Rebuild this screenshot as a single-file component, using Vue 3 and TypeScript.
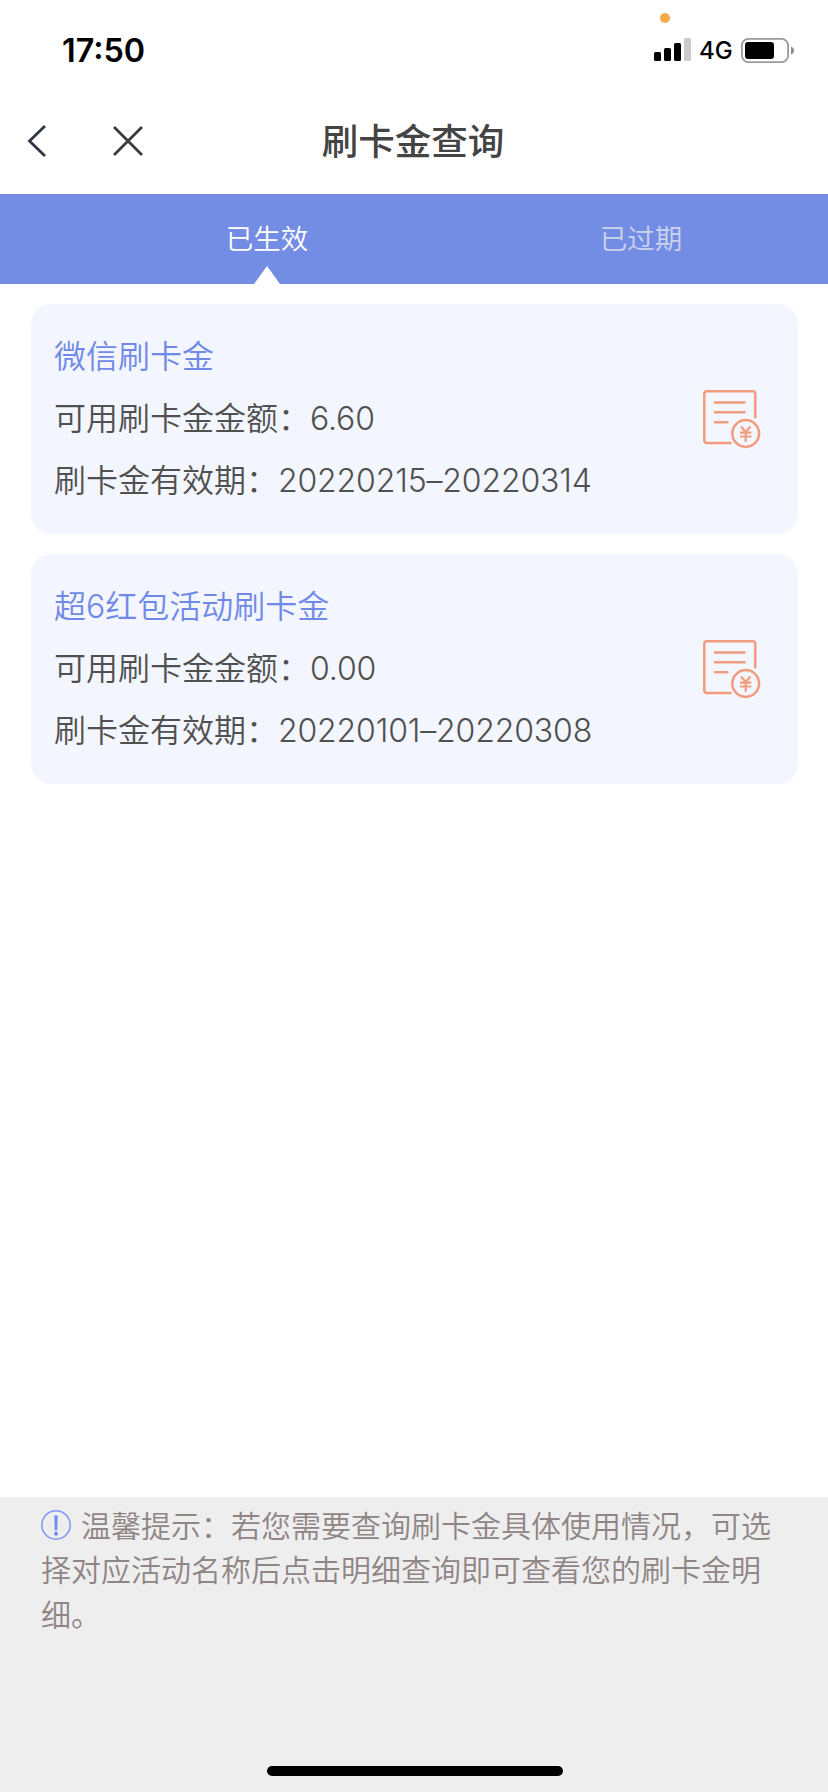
<script setup lang="ts">
import { ref } from 'vue'

interface Fund {
  name: string
  amount: string
  validity: string
}

const tabs: string[] = ['已生效', '已过期']
const activeTab = ref(0)

const funds: Fund[] = [
  { name: '微信刷卡金', amount: '6.60', validity: '20220215–20220314' },
  { name: '超6红包活动刷卡金', amount: '0.00', validity: '20220101–20220308' },
]
</script>

<template>
  <div class="screen">
    <header class="status">
      <span class="time">17:50</span>
      <i class="privacy-dot"></i>
      <div class="indicators">
        <svg class="signal" width="38" height="24" viewBox="0 0 38 24">
          <rect x="0" y="14" width="7" height="9" rx="1.5" />
          <rect x="10" y="10" width="7" height="13" rx="1.5" />
          <rect x="20" y="5" width="7" height="18" rx="1.5" />
          <rect x="30" y="0" width="7" height="23" rx="1.5" fill="#cbcbcb" />
        </svg>
        <span class="network">4G</span>
        <svg class="battery" width="53" height="25" viewBox="0 0 53 25">
          <rect x="0.9" y="0.9" width="46.2" height="23.2" rx="6.5" fill="none" stroke="#9b9b9b" stroke-width="1.8" />
          <rect x="4" y="4" width="29" height="17" rx="3" />
          <path d="M50 8.5 C54 10 54 15 50 16.5Z" fill="#8c8c8c" />
        </svg>
      </div>
    </header>

    <nav class="navbar">
      <svg class="back" width="20" height="34" viewBox="0 0 20 34">
        <path d="M18 2 L2.5 17 L18 32" fill="none" stroke="#2f3742" stroke-width="2.8" />
      </svg>
      <svg class="close" width="32" height="32" viewBox="0 0 32 32">
        <path d="M2 2 L30 30 M30 2 L2 30" fill="none" stroke="#3c3c3c" stroke-width="2.8" />
      </svg>
      <h1 class="title">刷卡金查询</h1>
    </nav>

    <div class="tabs">
      <button
        v-for="(tab, i) in tabs"
        :key="tab"
        class="tab"
        :class="{ active: i === activeTab }"
        @click="activeTab = i"
      >{{ tab }}</button>
    </div>

    <main class="list">
      <section v-for="fund in funds" :key="fund.name" class="card">
        <div class="info">
          <p class="name">{{ fund.name }}</p>
          <p>可用刷卡金金额：<span class="num">{{ fund.amount }}</span></p>
          <p>刷卡金有效期：<span class="num">{{ fund.validity }}</span></p>
        </div>
        <svg class="bill" width="58" height="59" viewBox="0 0 58 59" fill="none" stroke="#f19c7e" stroke-width="2.5">
          <path d="M52.3 28.5 V4 Q52.3 1.3 49.6 1.3 H4 Q1.3 1.3 1.3 4 V50.3 Q1.3 53 4 53 H28.5" />
          <path d="M12 12.4 H41.5 M12 22.3 H41.5 M12 32.2 H24.5" stroke-linecap="round" />
          <circle cx="42.7" cy="43.5" r="13.4" />
          <path d="M38 36.5 L42.7 42 L47.4 36.5 M42.7 42 V51.8 M37 42.6 H48.4 M37 46.5 H48.4" stroke-width="2.2" />
        </svg>
      </section>
    </main>

    <footer class="notice">
      <p class="tip">
        <svg class="alert" width="30" height="30" viewBox="0 0 30 30">
          <circle cx="15" cy="15" r="14.2" fill="none" stroke="#7b96f5" stroke-width="1.5" />
          <path d="M13.3 5.5 H16.7 L16.2 20.5 H13.8Z" fill="#6f8cf2" />
          <circle cx="15" cy="23.8" r="2" fill="#6f8cf2" />
        </svg>温馨提示：若您需要查询刷卡金具体使用情况，可选择对应活动名称后点击明细查询即可查看您的刷卡金明细。
      </p>
      <div class="home-bar"></div>
    </footer>
  </div>
</template>

<style>
body {
  margin: 0;
  background: #fff;
}
</style>

<style scoped>
.screen {
  width: 828px;
  height: 1792px;
  display: flex;
  flex-direction: column;
  background: #fff;
  overflow: hidden;
  font-family: "Noto Sans CJK SC", sans-serif;
  font-weight: 350;
}

.status {
  position: relative;
  height: 98px;
  box-sizing: border-box;
  padding: 2px 34px 0 62px;
  display: flex;
  align-items: center;
  justify-content: space-between;
  font-family: Inter, sans-serif;
  color: #000;
}

.time {
  font-size: 32.3px;
  font-weight: 600;
  line-height: 40px;
  padding-top: 2px;
}

.privacy-dot {
  position: absolute;
  left: 660px;
  top: 13px;
  width: 10px;
  height: 10px;
  border-radius: 50%;
  background: #f3aa48;
}

.indicators {
  display: flex;
  align-items: center;
}

.network {
  width: 34px;
  margin: 2px 8px 0 7px;
  font-size: 24px;
  line-height: 30px;
  font-weight: 450;
}

.battery {
  margin-top: 1px;
}

.navbar {
  position: relative;
  height: 96px;
  box-sizing: border-box;
  padding: 0 0 10px 27px;
  display: flex;
  align-items: center;
}

.close {
  margin-left: 65px;
}

.title {
  position: absolute;
  inset: 0 2px 10px 0;
  margin: 0;
  text-align: center;
  font-size: 36.5px;
  line-height: 84px;
  font-weight: 500;
  color: #444;
}

.tabs {
  height: 90px;
  box-sizing: border-box;
  padding-left: 80px;
  display: flex;
  background: #738de5;
}

.tab {
  position: relative;
  flex: 1;
  padding: 0 0 4px;
  border: 0;
  background: none;
  font: inherit;
  font-size: 27.5px;
  line-height: 86px;
  color: #cdd4ea;
}

.tab.active {
  color: #fff;
}

.tab.active::after {
  content: "";
  position: absolute;
  left: 50%;
  bottom: 0;
  margin-left: -13px;
  border: 13px solid transparent;
  border-top: 0;
  border-bottom: 18px solid #fff;
}

.list {
  flex: 1;
  display: flex;
  flex-direction: column;
  gap: 20px;
  padding: 20px 30px 0 30.5px;
}

.card {
  height: 230px;
  box-sizing: border-box;
  padding: 0 37px 0 23.5px;
  display: flex;
  align-items: center;
  justify-content: space-between;
  border-radius: 20px;
  background: #f3f6fe;
}

.info p {
  margin: 0;
  font-family: Inter, "Noto Sans CJK SC", sans-serif;
  font-size: 32px;
  line-height: 62px;
  color: #505050;
}

.info .name {
  color: #7089e8;
}

.num {
  letter-spacing: -0.15px;
}

.notice {
  height: 295px;
  box-sizing: border-box;
  padding: 5px 40px 16px 41px;
  display: flex;
  flex-direction: column;
  justify-content: space-between;
  align-items: center;
  background: #eee;
}

.tip {
  margin: 0;
  width: 100%;
  font-size: 30px;
  line-height: 44.3px;
  color: #8f8585;
}

.alert {
  margin-right: 10px;
  vertical-align: -3px;
}

.home-bar {
  width: 296px;
  height: 10px;
  border-radius: 5px;
  background: #000;
}
</style>
